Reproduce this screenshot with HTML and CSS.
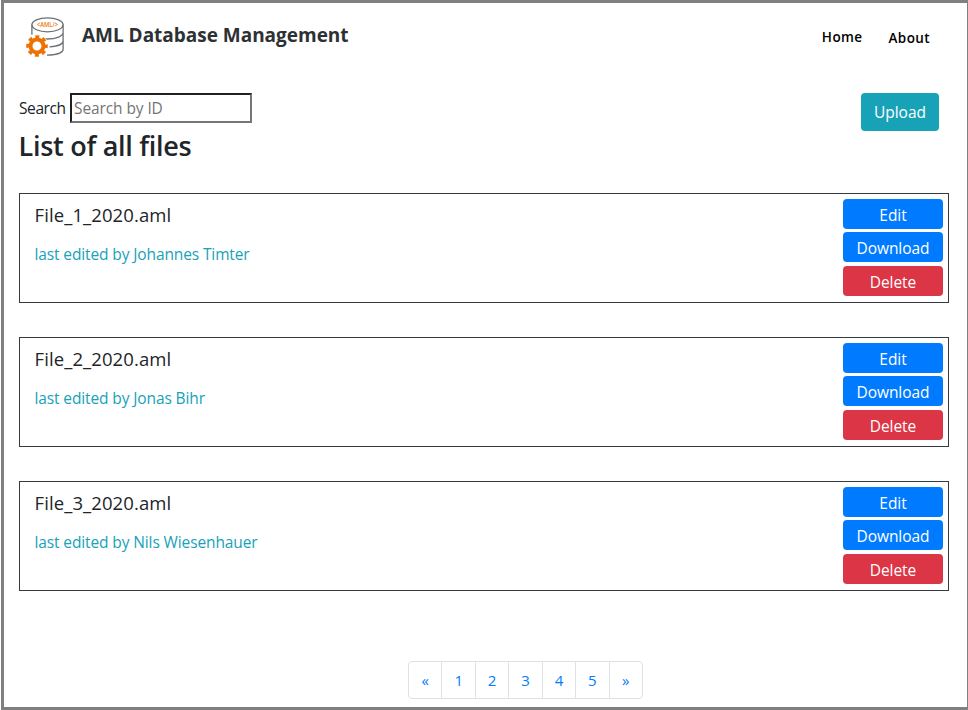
FILE: index.html
```html
<!DOCTYPE html>
<html lang="en">
<head>
<meta charset="utf-8">
<title>AML Database Management</title>
<link rel="stylesheet" href="styles.css">
</head>
<body>
<div class="frame">
  <header class="header">
    <svg class="logo" viewBox="0 0 40 42" width="40" height="42">
      <g fill="none" stroke="#6d7073" stroke-width="1.3">
        <ellipse cx="22.500" cy="8.800" rx="15.600" ry="7"/>
        <path d="M6.900 8.800v10M38.100 8.800v24.500c0 3.200-6 5.700-16.100 5.900M38.100 16.500c0 3.500-6.500 6.500-16.100 6.500-2 0-4-.1-5.500-.4M38.100 25c0 3-5.500 5.400-13.600 5.900"/>
      </g>
      <text class="logo-text" x="22.500" y="10.600" text-anchor="middle" textLength="21" lengthAdjust="spacingAndGlyphs">&lt;AML/&gt;</text>
      <circle cx="12" cy="30" r="9.400" fill="none" stroke="#fff" stroke-width="4"/>
      <circle cx="12" cy="30" r="6.500" fill="none" stroke="#ee7203" stroke-width="4"/>
      <circle cx="12" cy="30" r="9.300" fill="none" stroke="#ee7203" stroke-width="3" stroke-dasharray="4 3.304" stroke-dashoffset="2"/>
    </svg>
    <div class="brand">AML Database Management</div>
    <nav class="nav"><a class="home">Home</a><a class="about">About</a></nav>
  </header>
  <section class="toolbar">
    <div class="search"><label for="search">Search</label><input id="search" type="text" placeholder="Search by ID"></div>
    <button class="btn upload">Upload</button>
  </section>
  <h2 class="title">List of all files</h2>
  <main class="list">
    <article class="card">
      <div class="info"><h5>File_1_2020.aml</h5><p>last edited by Johannes Timter</p></div>
      <div class="actions"><button class="btn">Edit</button><button class="btn">Download</button><button class="btn delete">Delete</button></div>
    </article>
    <article class="card">
      <div class="info"><h5>File_2_2020.aml</h5><p>last edited by Jonas Bihr</p></div>
      <div class="actions"><button class="btn">Edit</button><button class="btn">Download</button><button class="btn delete">Delete</button></div>
    </article>
    <article class="card">
      <div class="info"><h5>File_3_2020.aml</h5><p>last edited by Nils Wiesenhauer</p></div>
      <div class="actions"><button class="btn">Edit</button><button class="btn">Download</button><button class="btn delete">Delete</button></div>
    </article>
  </main>
  <nav class="pages"><a>«</a><a>1</a><a>2</a><a>3</a><a>4</a><a>5</a><a>»</a></nav>
</div>
</body>
</html>
```
FILE: styles.css
```css
* { box-sizing: border-box; }
body {
  margin: 0;
  background: #fff;
  color: #212529;
  font: 400 15.500px/24px "Open Sans", "Noto Sans", sans-serif;
  letter-spacing: -0.120px;
  overflow: hidden;
}
.frame {
  height: 710px;
  margin-left: 1px;
  padding: 0 18px 0 15px;
  border: 3px solid #808080;
  border-right-width: 1px;
}
.header { display: flex; height: 90px; padding: 13px 19px 0 6px; }
.logo { flex: none; }
.logo-text { font: 600 6.800px "Open Sans", sans-serif; letter-spacing: 0; fill: #ee7203; }
.brand {
  margin: 4px 0 0 17px;
  font-size: 19px;
  font-weight: 700;
  line-height: 30px;
  letter-spacing: -0.020px;
  color: #2d3134;
  white-space: nowrap;
}
.nav {
  display: flex;
  gap: 26px;
  margin: 9px 0 0 auto;
  font-size: 13.500px;
  font-weight: 600;
  letter-spacing: 0.400px;
  color: #000;
}
.about { padding-top: 1px; }
.toolbar { display: flex; justify-content: space-between; height: 38px; padding-right: 10px; }
.search { display: flex; align-items: center; height: 30px; }
.search label { width: 51px; letter-spacing: -0.400px; }
.search input {
  width: 182px;
  height: 30px;
  padding: 1px 2px;
  border: 2px inset #767676;
  border-radius: 0;
  font: inherit;
  letter-spacing: -0.100px;
}
.search input::placeholder { color: #757575; }
.btn {
  display: block;
  width: 100px;
  height: 30px;
  padding: 2px 0 0;
  border: 0;
  border-radius: 4px;
  background: #007bff;
  color: #fff;
  font: inherit;
  letter-spacing: -0.050px;
}
.btn.upload { width: 78px; height: 38px; padding-top: 0; background: #17a2b8; }
.btn.delete { margin-top: 1px; background: #dc3545; }
.title {
  height: 62px;
  margin: 0;
  font-size: 27px;
  font-weight: 600;
  line-height: 30px;
  letter-spacing: -0.270px;
  text-indent: -0.500px;
}
.list { display: grid; gap: 34px; }
.card {
  display: flex;
  justify-content: space-between;
  height: 110px;
  padding: 5px 5px 0 14.500px;
  border: 1px solid #343a40;
}
.info h5 { margin: 4px 0 15px; font-size: 18.500px; font-weight: 400; line-height: 24px; letter-spacing: 0.100px; }
.info p { margin: 0; color: #17a2b8; }
.actions { display: grid; grid-template-rows: 30px 30px 31px; gap: 3px; }
.pages {
  display: flex;
  width: 235px;
  height: 38px;
  margin: 70px 0 0 389px;
  border: 1px solid #dee2e6;
  border-radius: 4px;
}
.pages a {
  flex: 1;
  padding-top: 6px;
  text-align: center;
  font-size: 15px;
  color: #007bff;
}
.pages a + a { border-left: 1px solid #dee2e6; }
```
